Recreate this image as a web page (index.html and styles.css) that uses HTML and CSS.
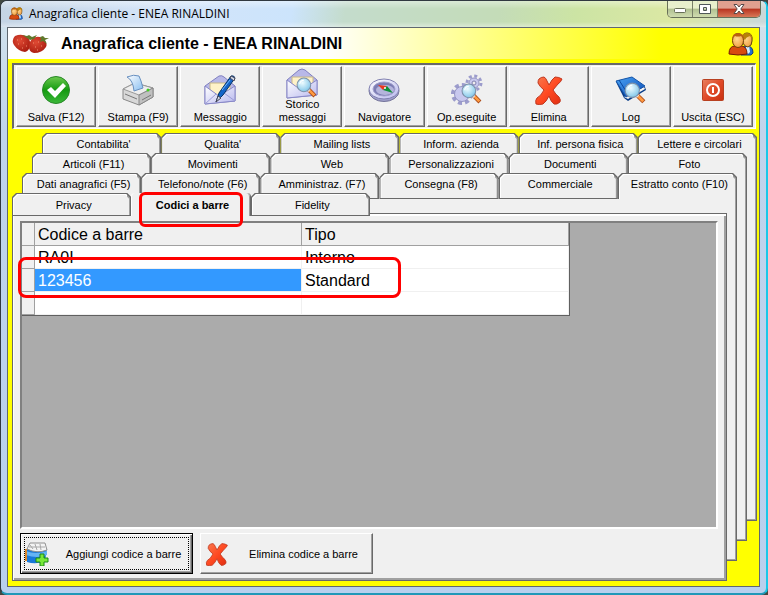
FILE: index.html
```html
<!DOCTYPE html>
<html lang="it">
<head>
<meta charset="utf-8">
<meta name="viewport" content="width=device-width, initial-scale=1">
<title>Anagrafica cliente - ENEA RINALDINI</title>
<link rel="stylesheet" href="styles.css">
</head>
<body>
<svg class="defs" aria-hidden="true">
  <defs>
    <linearGradient id="g-green" x1="0" y1="0" x2="0" y2="1"><stop offset="0" stop-color="#6cc94e"/><stop offset=".5" stop-color="#149a10"/><stop offset="1" stop-color="#3cb83a"/></linearGradient>
    <linearGradient id="g-red" x1="0" y1="0" x2="1" y2="1"><stop offset="0" stop-color="#f87a50"/><stop offset=".5" stop-color="#ff4a22"/><stop offset="1" stop-color="#e02c10"/></linearGradient>
    <linearGradient id="g-power" x1="0" y1="0" x2="1" y2="1"><stop offset="0" stop-color="#e88060"/><stop offset=".5" stop-color="#e04a28"/><stop offset="1" stop-color="#c83010"/></linearGradient>
    <linearGradient id="g-paper" x1="0" y1="0" x2="1" y2="1"><stop offset="0" stop-color="#ffffff"/><stop offset="1" stop-color="#b8b8ee"/></linearGradient>
    <linearGradient id="g-sheet" x1="0" y1="0" x2="1" y2="1"><stop offset="0" stop-color="#ffffff"/><stop offset="1" stop-color="#86bdf0"/></linearGradient>
    <linearGradient id="g-book" x1="0" y1="0" x2="1" y2="1"><stop offset="0" stop-color="#4aa4f4"/><stop offset="1" stop-color="#0848b4"/></linearGradient>
    <radialGradient id="g-lens" cx=".4" cy=".35" r=".7"><stop offset="0" stop-color="#eefcff"/><stop offset="1" stop-color="#7cc4e8"/></radialGradient>
    <radialGradient id="g-berry" cx=".4" cy=".35" r=".7"><stop offset="0" stop-color="#e04a34"/><stop offset="1" stop-color="#a81c10"/></radialGradient>
    <radialGradient id="g-face" cx=".4" cy=".4" r=".7"><stop offset="0" stop-color="#ffd890"/><stop offset="1" stop-color="#f09838"/></radialGradient>
    <symbol id="lens" viewBox="0 0 20 20">
      <path d="M12 12l6 6" stroke="#a84818" stroke-width="4"/>
      <path d="M12.500 12.500l5 5" stroke="#ff9a40" stroke-width="2.500"/>
      <path d="M13 11.500l-2 2" stroke="#e8e8e8" stroke-width="2"/>
      <circle cx="7.500" cy="7.500" r="6.500" fill="url(#g-lens)" stroke="#7c90a8"/>
      <path d="M3.500 7a4 4 0 0 1 4-4" fill="none" stroke="#fff"/>
    </symbol>
    <symbol id="cross" viewBox="0 0 30 30">
      <path d="M5 4q2-2 5-2 2 1 3 4l2 4q3-6 6-8 4 0 7 2-1 3-4 5l-5 6q3 5 6 7 2 3 1 5-3 3-6 2-3-2-5-8-3 6-6 8-4 1-7 0-1-4 1-6 4-2 7-8-4-3-6-7 0-3 1-4z" fill="url(#g-red)" stroke="#c03820"/>
    </symbol>
    <symbol id="people" viewBox="0 0 26 24">
      <path d="M13 23q0-9 6-9 6 0 6 7l-2 2z" fill="#2470d0" stroke="#123c80"/>
      <path d="M18 13h3l1 7-2 2-2-2z" fill="#d8f0ff"/>
      <path d="M14 8q0-7 5-7 6 0 5 8 0 5-4 6-5-1-6-7z" fill="url(#g-face)" stroke="#604010"/>
      <path d="M14 5q0-4 5-4 6 0 5 6l-2-3q-4 1-5 4z" fill="#b88008"/>
      <path d="M1 22q0-8 6-8h7q5 1 5 8-9 2-18 0z" fill="#d84c10" stroke="#741c04"/>
      <ellipse cx="10" cy="8.500" rx="5.500" ry="7" fill="url(#g-face)" stroke="#704008"/>
      <path d="M4 8q0-7 6-7 6 0 6 7-1-3-3-4-3 1-6 0-2 1-3 4z" fill="#b86010"/>
    </symbol>
  </defs>
</svg>
<main class="window">
  <header class="titlebar">
    <svg class="title-icon"><use href="#people"/></svg>
    <span class="title-text">Anagrafica cliente - ENEA RINALDINI</span>
    <div class="controls">
      <button class="ctl" aria-label="Riduci a icona"><svg width="12" height="10" viewBox="0 0 12 10"><rect x=".5" y="4.500" width="11" height="4" rx="1" fill="#fff" stroke="#687058"/></svg></button>
      <button class="ctl" aria-label="Ingrandisci"><svg width="12" height="10" viewBox="0 0 12 10"><path d="M.5.5h11v9H.5zM4.500 3.500h3v3h-3z" fill="#fff" fill-rule="evenodd" stroke="#505858"/></svg></button>
      <button class="ctl ctl-close" aria-label="Chiudi"><svg width="12" height="10" viewBox="0 0 12 10"><path d="M1 .5h3l2 2.500 2-2.500h3L7.800 5 11 9.500H8L6 7 4 9.500H1L4.200 5z" fill="#fff" stroke="#584848"/></svg></button>
    </div>
  </header>
  <section class="client">
    <div class="banner">
      <svg class="berries" viewBox="0 0 38 20">
        <path d="M3 2q7-3 12 1 4 3 3 9-1 5-5 6Q6 17 2 11-1 6 3 2z" fill="url(#g-berry)"/>
        <path d="M20 5q5-4 10-1 6 4 4 9-4 6-12 6-5-1-5-6 0-5 3-8z" fill="url(#g-berry)"/>
        <path d="M15 4l-5-3 5 1 2-1 3 2 5-2-3 4-4 1zM28 3l3-1 2 2 4 0-4 2 2 4-4-3-3 1 1-3z" fill="#60782c"/>
        <path d="M5 6h1M9 5h1M6 10h1M11 9h1M10 14h1M14 12h1M21 9h1M26 8h1M23 13h1M29 12h1M25 16h1" stroke="#f09070"/>
      </svg>
      <h1 class="banner-title">Anagrafica cliente - ENEA RINALDINI</h1>
      <svg class="people"><use href="#people"/></svg>
    </div>
    <nav class="toolbar" aria-label="Comandi">
      <button class="tool"><svg class="icon" viewBox="0 0 32 32"><circle cx="16" cy="16" r="13.500" fill="url(#g-green)" stroke="#288828"/><path d="M7 16l4-3 4 4 8-8 3 3-11 12z" fill="#fff"/></svg><span>Salva (F12)</span></button>
      <button class="tool"><svg class="icon" viewBox="0 0 32 32"><path d="M1 15l12-6 18 5v9l-14 8-16-6z" fill="#d8d8d8" stroke="#888"/><path d="M1 15l12-6 18 5-14 7z" fill="#eee" stroke="#999"/><path d="M5 3q7-3 12-1 2 4 4 12l-9 3Q11 6 5 3z" fill="url(#g-sheet)" stroke="#6890c0"/><path d="M17 21v10l14-8v-9z" fill="#c0c0c0" stroke="#888"/><path d="M3 20l12 5M20 26l9-5" stroke="#777"/><circle cx="26" cy="16" r="1.500" fill="#40d020"/></svg><span>Stampa (F9)</span></button>
      <button class="tool"><svg class="icon" viewBox="0 0 32 32"><path d="M1 12L15 2q3-1 5 1l11 9v15L1 30z" fill="#b8b8e8" stroke="#8080c0"/><path d="M6 9h20v9l-11 5-9-5z" fill="#fff2c8" stroke="#c8b888"/><path d="M1 12l14 10 16-10v15L1 30z" fill="url(#g-paper)" stroke="#8888c8"/><path d="M1 30l11-10M31 27l-11-8" stroke="#9c9cd8"/><path d="M12 28l3-9L27 2q3-1 4 2L19 21z" fill="#1464c8" stroke="#083468"/><path d="M12 28l2-6 3 2zM27 2l4 2-1 3-4-3z" fill="#d0d8e8" stroke="#445"/><path d="M18 16l8-10" stroke="#70b8ff"/></svg><span>Messaggio</span></button>
      <button class="tool tool-tall"><svg class="icon" viewBox="0 0 32 32"><path d="M1 12L13 2q3-2 6 0l12 10v15L1 30z" fill="#b8b8e8" stroke="#8080c0"/><path d="M6 9h21v10l-11 5-10-5z" fill="#fff2c8" stroke="#c8b888"/><path d="M1 12l14 10 16-10v15L1 30z" fill="url(#g-paper)" stroke="#8888c8"/><use href="#lens" x="10" y="9" width="21" height="21"/></svg><span>Storico messaggi</span></button>
      <button class="tool"><svg class="icon" viewBox="0 0 32 32"><ellipse cx="16" cy="17" rx="15" ry="10.500" fill="#a0a0cc" stroke="#747499"/><ellipse cx="16" cy="15" rx="15" ry="10" fill="url(#g-paper)" stroke="#8080b0"/><ellipse cx="16" cy="15" rx="11" ry="7" fill="#7c7cb4" stroke="#a0a0cc"/><ellipse cx="17" cy="16" rx="9" ry="5" fill="#b4b4dc"/><path d="M10 11l9 1-4 4z" fill="#e83820"/><path d="M25 19l-6-7-4 4z" fill="#109038"/><circle cx="17" cy="14" r="1" fill="#fff"/></svg><span>Navigatore</span></button>
      <button class="tool"><svg class="icon" viewBox="0 0 32 32"><circle cx="23" cy="9" r="7" fill="none" stroke="#9c9ccc" stroke-width="3" stroke-dasharray="3 2.500"/><circle cx="23" cy="9" r="5" fill="#c8c8ee" stroke="#9494c4"/><circle cx="23" cy="9" r="2" fill="#eee" stroke="#8080b0"/><circle cx="11" cy="20" r="9" fill="none" stroke="#9c9ccc" stroke-width="4" stroke-dasharray="4 3"/><circle cx="11" cy="20" r="7.500" fill="#c8c8ee" stroke="#9494c4"/><use href="#lens" x="10" y="9" width="21" height="21"/></svg><span>Op.eseguite</span></button>
      <button class="tool"><svg class="icon" viewBox="0 0 32 32"><use href="#cross" x="1" y="1" width="30" height="30"/></svg><span>Elimina</span></button>
      <button class="tool"><svg class="icon" viewBox="0 0 32 32"><path d="M1 8l8 16 4 3 18-11-1-3z" fill="#083c88"/><path d="M9 23l4 2 17-10-1-2z" fill="#f4f4f4"/><path d="M1 7L17 3l13 9-19 11z" fill="url(#g-book)" stroke="#1454a8"/><path d="M4 6l10 16" stroke="#0848a0"/><use href="#lens" x="9" y="8" width="22" height="22"/></svg><span>Log</span></button>
      <button class="tool"><svg class="icon" viewBox="0 0 32 32"><rect x="5.500" y="5.500" width="21" height="21" rx="1" fill="url(#g-power)" stroke="#b84020"/><circle cx="16" cy="16" r="6" fill="none" stroke="#fff" stroke-width="2"/><path d="M16 13v6" stroke="#fff" stroke-width="2"/></svg><span>Uscita (ESC)</span></button>
    </nav>
    <div class="stack">
      <div class="layer layer-1">
        <div class="tabs"><button class="tab">Contabilita'</button><button class="tab">Qualita'</button><button class="tab">Mailing lists</button><button class="tab">Inform. azienda</button><button class="tab">Inf. persona fisica</button><button class="tab tab-open">Lettere e circolari</button></div>
        <div class="back"></div>
      </div>
      <div class="layer layer-2">
        <div class="tabs"><button class="tab">Articoli (F11)</button><button class="tab">Movimenti</button><button class="tab">Web</button><button class="tab">Personalizzazioni</button><button class="tab">Documenti</button><button class="tab tab-open">Foto</button></div>
        <div class="back"></div>
      </div>
      <div class="layer layer-3">
        <div class="tabs"><button class="tab">Dati anagrafici (F5)</button><button class="tab">Telefono/note (F6)</button><button class="tab">Amministraz. (F7)</button><button class="tab">Consegna (F8)</button><button class="tab">Commerciale</button><button class="tab tab-open">Estratto conto (F10)</button></div>
        <div class="back"></div>
      </div>
      <div class="layer layer-4">
        <div class="tabs tabs-front"><button class="tab">Privacy</button><button class="tab tab-active">Codici a barre<span class="mark mark-tab"></span></button><button class="tab">Fidelity</button></div>
        <div class="page">
          <div class="grid-area">
            <div class="table-wrap">
              <table class="grid">
                <thead><tr><th class="sel"></th><th>Codice a barre</th><th>Tipo</th></tr></thead>
                <tbody>
                  <tr><th class="sel"></th><td>RA0I</td><td>Interno</td></tr>
                  <tr><th class="sel"></th><td class="current">123456</td><td>Standard</td></tr>
                  <tr><th class="sel"></th><td></td><td></td></tr>
                </tbody>
              </table>
              <span class="mark mark-row"></span>
            </div>
          </div>
          <div class="actions">
            <button class="action action-focus"><svg class="action-icon" viewBox="0 0 24 24"><path d="M1 7h21l-2 12q-9 4-18 1z" fill="#1878d8"/><path d="M1 9q10 4 21 0v4Q12 17 1 13z" fill="#64b4f4"/><path d="M0 7h2v12H0z" fill="#d88830"/><path d="M2 7l3-6h15l2 7q-10 4-20-1z" fill="#f4f4f4" stroke="#909090"/><path d="M5 3l3 4M10 2l2 6M15 2l1 6M4 5h16" stroke="#a8a8a8"/><path d="M15 12h4v4h4v4h-4v4h-4v-4h-4v-4h4z" fill="#78e838" stroke="#188818"/></svg><span class="action-label">Aggiungi codice a barre</span></button>
            <button class="action"><svg class="action-icon"><use href="#cross"/></svg><span class="action-label">Elimina codice a barre</span></button>
          </div>
        </div>
      </div>
    </div>
  </section>
</main>
</body>
</html>
```
FILE: styles.css
```css
* { box-sizing: border-box; }
body { margin: 0; background: #404840; font-family: "Liberation Sans", Arial, sans-serif; font-size: 11px; color: #000; }
button { font: inherit; color: inherit; margin: 0; padding: 0; border: 0; }
svg { display: block; flex: none; }
.defs { position: absolute; width: 0; height: 0; }

.window {
  display: flex; flex-direction: column; min-height: 100vh;
  padding: 0 6px; border: 1px solid #303840; border-right: 2px solid #18c8e8; border-bottom: 2px solid #2098b8; border-radius: 7px;
  background: linear-gradient(180deg, #d4e4ec 0, #c0d4ec 130px, #b8d0ee 100%);
}
.titlebar {
  display: flex; align-items: flex-start; height: 26px; margin: 0 -6px; padding-left: 8px; border-radius: 6px 6px 0 0;
  background: linear-gradient(180deg, #ffffff60, #ffffff00 30%, #ffffff00 80%, #ffffff60), linear-gradient(100deg, #c4d4e4, #d4e4f8 20%, #cce4fc 38%, #c4dccc 45%, #c4dcb8 65%, #cce4a4 75%, #dce8a4 88%, #c8d8dc);
}
.title-icon { width: 14px; height: 13px; margin-top: 6px; }
.title-text { flex: 1; margin: 4px 0 0 6px; font: 12px/18px "Open Sans", "Noto Sans", sans-serif; }
.controls { display: flex; height: 17px; margin-right: 5px; border: 1px solid #687058; border-top: 0; border-radius: 0 0 5px 5px; overflow: hidden; }
.ctl { display: grid; place-items: center; width: 25px; border-right: 1px solid #788068; background: linear-gradient(#e8f0cc 45%, #b0c090 50%, #d0dcb0); }
.ctl-close { width: 42px; border-right: 0; background: linear-gradient(#e0a090 45%, #b83420 50%, #d87858); }

.client { flex: 1; display: flex; flex-direction: column; margin-bottom: 6px; padding-bottom: 5px; border: 1px solid #606870; background: #ff0; }
.banner { display: flex; align-items: center; height: 31px; padding: 0 4px; background: linear-gradient(90deg, #fff 42%, #ff0 87%); }
.berries { width: 38px; height: 20px; }
.banner-title { flex: 1; margin: 0 0 0 11px; font-size: 16px; line-height: 20px; font-weight: bold; }
.people { width: 28px; height: 24px; }

.toolbar { display: flex; gap: 2px; margin: 4px 3px 0 4px; padding: 1px 2px; border: solid; border-width: 2px 1px 1px 2px; border-color: #696969 #fff #fff #696969; background: #f0f0f0; }
.tool {
  flex: 1; min-width: 0; display: flex; flex-direction: column; align-items: center; justify-content: space-between;
  height: 61px; padding: 7px 0 2px;
  border: 1px solid; border-color: #fff #696969 #696969 #fff; background: #f0f0f0; box-shadow: inset -1px -1px #a0a0a0;
  line-height: 13px;
}
.tool-tall { padding-top: 1px; }
.tool span { max-width: 72px; }
.icon { width: 32px; height: 32px; margin-bottom: -6px; }

.stack { flex: 1; display: grid; margin: 4px 2px 0 4px; }
.layer { grid-area: 1 / 1; display: flex; flex-direction: column; }
.layer-1 { margin: 0 0 60px 30px; }
.layer-2 { margin: 20px 10px 40px 20px; }
.layer-3 { margin: 40px 20px 20px 10px; }
.layer-4 { margin: 60px 30px 0 0; }
.tabs { display: grid; grid-template-columns: repeat(6, 1fr); height: 26px; }
.tab {
  position: relative; isolation: isolate; padding: 0 0 5px 4px; background: #696969;
  clip-path: polygon(0 4px, 4px 0, calc(100% - 4px) 0, 100% 4px, 100% 100%, 0 100%);
}
.tab::before, .tab::after {
  content: ""; position: absolute; z-index: -1; clip-path: polygon(0 4px, 4px 0, calc(100% - 4px) 0, 100% 4px, 100% 100%, 0 100%);
}
.tab::before { inset: 1px; background: linear-gradient(90deg, #fff calc(100% - 3px), #a0a0a0 calc(100% - 3px)); }
.tab::after { inset: 2px 2px 1px; background: #f0f0f0; }
.tab-open::before, .tab-open::after { bottom: 0; }
.back { flex: 1; border: solid #696969; border-width: 0 1px 1px; background: #f0f0f0; box-shadow: inset 1px 0 #fff, inset -1px -1px #a0a0a0; }
.tabs-front { height: 20px; width: 358px; grid-template-columns: repeat(3, 1fr); }
.tabs-front .tab { padding-bottom: 0; }
.tabs-front .tab-active { z-index: 1; height: 23px; clip-path: none; background: #f0f0f0; font-weight: bold; border-right: 1px solid #696969; border-radius: 4px 4px 0 0; }
.tab-active::before { display: none; }
.tabs-front .tab-active::after { inset: 0; clip-path: none; border-left: 1px solid #fff; border-right: 1px solid #a0a0a0; border-radius: 4px 4px 0 0; }
.page {
  flex: 1; display: flex; flex-direction: column; padding: 7px 8px 6px 7px; border: 1px solid #696969; background: #f0f0f0;
  box-shadow: inset 1px 2px #fff, inset -2px -2px #a0a0a0;
}
.grid-area { flex: 1; border: solid; border-width: 2px; border-color: #808080 #fff #fff #808080; background: #ababab; }
.table-wrap { position: relative; width: 548px; max-width: 100%; }
.grid { width: 100%; table-layout: fixed; border-spacing: 0; border-right: 1px solid #606060; border-bottom: 1px solid #606060; background: #fff; font-size: 16px; line-height: 20px; }
.grid th, .grid td { height: 23px; padding: 2px 3px 0; text-align: left; font-weight: normal; border-right: 1px solid #f0f0f0; border-bottom: 1px solid #f0f0f0; }
.grid thead th, .grid .sel { background: #f0f0f0; border-color: #a0a0a0; }
.grid .sel { width: 13px; }
.grid .current { background: #39f; color: #fff; }
.actions { display: flex; gap: 7px; padding-top: 4px; }
.action { display: flex; align-items: center; width: 173px; height: 41px; padding: 0 4px; border: 1px solid; border-color: #fff #696969 #696969 #fff; box-shadow: inset -1px -1px #a0a0a0; background: #f0f0f0; }
.action-focus { border-color: #000; box-shadow: inset 1px 1px #fff, inset -1px -1px #696969, inset -2px -2px #a0a0a0; outline: 1px dotted #000; outline-offset: -5px; }
.action-icon { width: 24px; height: 24px; }
.action-label { flex: 1; text-align: center; padding-left: 10px; }

.mark { position: absolute; border: 3px solid #f00; border-radius: 6px; pointer-events: none; }
.mark-tab { inset: -1px 7px -11px 8px; }
.mark-row { inset: 34px 169px 18px -4px; border-radius: 8px; }
```
